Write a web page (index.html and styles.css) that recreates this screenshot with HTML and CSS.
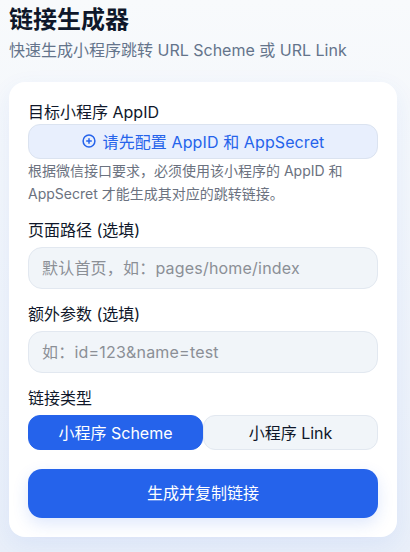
FILE: index.html
```html
<!DOCTYPE html>
<html lang="zh-CN">
<head>
    <meta charset="UTF-8">
    <meta name="viewport" content="width=device-width, initial-scale=1.0">
    <title>链接生成器</title>
    <link rel="stylesheet" href="styles.css">
</head>
<body>
    <div class="page">
        <h1>链接生成器</h1>
        <p class="subtitle">快速生成小程序跳转 URL Scheme 或 URL Link</p>

        <form class="card">
            <div class="form-group appid-group">
                <label>目标小程序 AppID</label>
                <button type="button" class="config-btn">
                    <svg class="plus-icon" viewBox="0 0 14 14" width="14" height="14">
                        <circle cx="7" cy="7" r="5.9" fill="none" stroke="currentColor" stroke-width="1.5"/>
                        <path d="M7 4.2v5.6M4.2 7h5.6" fill="none" stroke="currentColor" stroke-width="1.5"/>
                    </svg>
                    请先配置 AppID 和 AppSecret
                </button>
                <p class="hint">根据微信接口要求，必须使用该小程序的 AppID 和 AppSecret 才能生成其对应的跳转链接。</p>
            </div>

            <div class="form-group">
                <label for="path">页面路径 (选填)</label>
                <input type="text" id="path" placeholder="默认首页，如：pages/home/index">
            </div>

            <div class="form-group">
                <label for="query">额外参数 (选填)</label>
                <input type="text" id="query" placeholder="如：id=123&amp;name=test">
            </div>

            <div class="form-group type-group">
                <label>链接类型</label>
                <div class="toggle">
                    <button type="button" class="toggle-btn active">小程序 Scheme</button>
                    <button type="button" class="toggle-btn">小程序 Link</button>
                </div>
            </div>

            <button type="submit" class="submit-btn">生成并复制链接</button>
        </form>
    </div>
</body>
</html>
```

FILE: styles.css
```css
* {
    box-sizing: border-box;
}

html, body {
    height: 100%;
}

body {
    margin: 0;
    font-family: Inter, "Noto Sans CJK SC", sans-serif;
    color: #0f172a;
    background: linear-gradient(180deg, #f8fafc 0%, #e9eff9 100%);
    overflow: hidden;
}

.page {
    padding: 4px 13px 15px 9px;
}

h1 {
    margin: 0;
    font-size: 24px;
    line-height: 32px;
    font-weight: 700;
}

.subtitle {
    margin: 1px 0 18px;
    font-size: 16px;
    line-height: 27px;
    color: #64748b;
}

.card {
    background-color: white;
    border-radius: 16px;
    padding: 19px;
    box-shadow: 0 8px 24px rgba(37, 99, 235, 0.08);
}

.form-group {
    margin-bottom: 13px;
}

label {
    display: block;
    margin-bottom: 5px;
    font-size: 16px;
    line-height: 24px;
    color: #0f172a;
}

.appid-group label {
    margin-bottom: 0;
    line-height: 23px;
}

.config-btn {
    display: flex;
    align-items: center;
    justify-content: center;
    gap: 7px;
    width: 100%;
    height: 35px;
    padding: 0 0 1px;
    border: 1px solid #dbe3f0;
    border-radius: 12px;
    background-color: #e8effd;
    color: #2563eb;
    font: inherit;
    font-size: 16px;
    letter-spacing: 0.1px;
}

.hint {
    margin: 0;
    font-size: 14px;
    line-height: 23px;
    color: #6b7280;
}

input {
    display: block;
    width: 100%;
    height: 42px;
    padding: 0 13px;
    border: 1px solid #e2e8f0;
    border-radius: 14px;
    background-color: #f1f5f9;
    font: inherit;
    font-size: 16px;
    letter-spacing: 0.2px;
}

input::placeholder {
    color: #8b8f96;
}

.type-group {
    margin-bottom: 19px;
}

.toggle {
    display: flex;
}

.toggle-btn {
    flex: 1;
    height: 35px;
    padding: 0 0 2px;
    border: 1px solid #e2e8f0;
    border-radius: 12px;
    background-color: #f1f5f9;
    color: #0f172a;
    font: inherit;
    font-size: 16px;
}

.toggle-btn.active {
    border-color: #2563eb;
    background-color: #2563eb;
    color: white;
}

.submit-btn {
    display: block;
    width: 100%;
    height: 49px;
    padding: 0 0 3px;
    border: none;
    border-radius: 14px;
    background-color: #2563eb;
    color: white;
    font: inherit;
    font-size: 16px;
    box-shadow: 0 6px 16px rgba(37, 99, 235, 0.15);
}
```
